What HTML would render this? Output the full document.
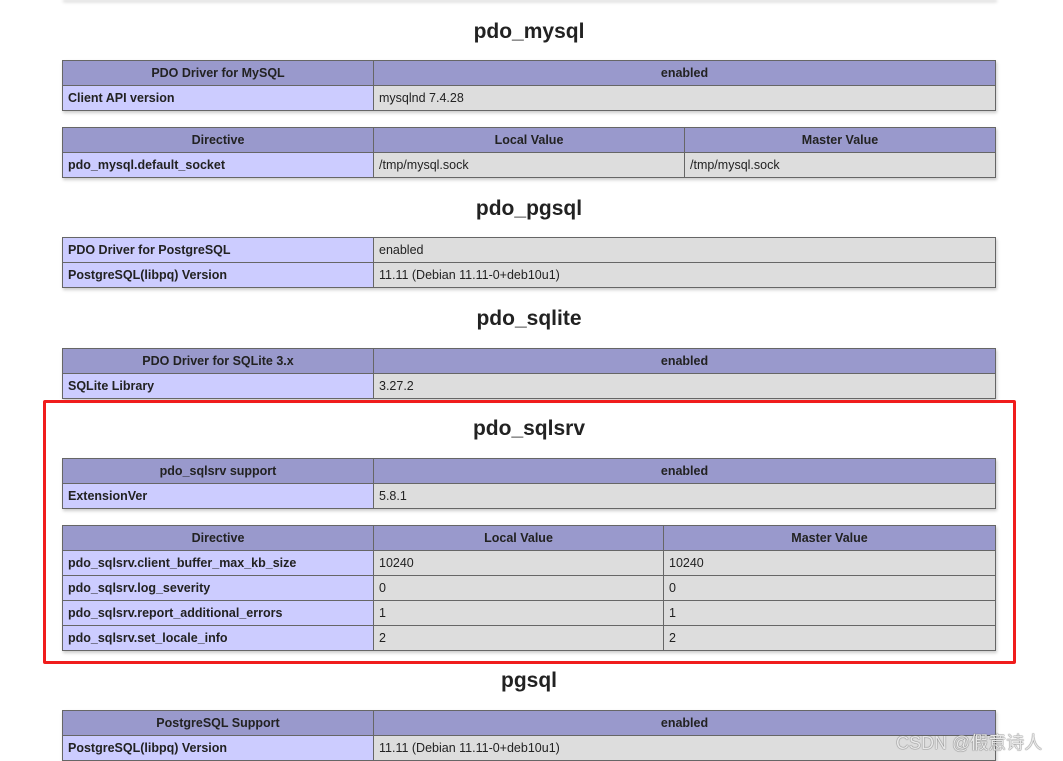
<!DOCTYPE html>
<html><head><meta charset="utf-8"><style>
body{margin:0;width:1063px;height:761px;overflow:hidden;background:#fff;position:relative;font-family:"Liberation Sans","DejaVu Sans",sans-serif;color:#222;}
.t{position:absolute;left:62px;width:934px;border-collapse:collapse;box-shadow:1px 2px 3px #ccc;font-size:12.5px;}
.t td,.t th{border:1px solid #666;height:25px;padding:0 5px;box-sizing:border-box;vertical-align:middle;}
.t th{background:#9999cc;font-weight:bold;text-align:center;}
.t td.e{background:#ccccff;font-weight:bold;}
.t td.v{background:#dddddd;}
h2{position:absolute;left:62px;width:934px;margin:0;text-align:center;font-size:21px;font-weight:bold;color:#222;line-height:26px;}
.red{position:absolute;left:43px;top:400px;width:967px;height:258px;border:3px solid #f01c1c;border-radius:2px;}
.wm{position:absolute;left:896px;top:729px;font-size:18px;color:#e8e8e8;text-shadow:0 0 1px #666,0 0 1px #666;font-family:"Liberation Sans","Noto Sans CJK SC",sans-serif;}
</style></head><body>
<div style="position:absolute;left:62px;top:-2px;width:934px;height:2px;background:#666;box-shadow:1px 2px 3px #ccc"></div>

<h2 style="top:19px">pdo_mysql</h2>
<table class="t" style="top:60px"><tr><th style="width:311px">PDO Driver for MySQL</th><th>enabled</th></tr>
<tr><td class="e">Client API version</td><td class="v">mysqlnd 7.4.28</td></tr></table>
<table class="t" style="top:127px"><tr><th style="width:311px">Directive</th><th style="width:311px">Local Value</th><th>Master Value</th></tr>
<tr><td class="e">pdo_mysql.default_socket</td><td class="v">/tmp/mysql.sock</td><td class="v">/tmp/mysql.sock</td></tr></table>

<h2 style="top:196px">pdo_pgsql</h2>
<table class="t" style="top:237px"><tr><td class="e" style="width:311px">PDO Driver for PostgreSQL</td><td class="v">enabled</td></tr>
<tr><td class="e">PostgreSQL(libpq) Version</td><td class="v">11.11 (Debian 11.11-0+deb10u1)</td></tr></table>

<h2 style="top:306px">pdo_sqlite</h2>
<table class="t" style="top:348px"><tr><th style="width:311px">PDO Driver for SQLite 3.x</th><th>enabled</th></tr>
<tr><td class="e">SQLite Library</td><td class="v">3.27.2</td></tr></table>

<div class="red"></div>
<h2 style="top:416px">pdo_sqlsrv</h2>
<table class="t" style="top:458px"><tr><th style="width:311px">pdo_sqlsrv support</th><th>enabled</th></tr>
<tr><td class="e">ExtensionVer</td><td class="v">5.8.1</td></tr></table>
<table class="t" style="top:525px"><tr><th style="width:311px">Directive</th><th style="width:290px">Local Value</th><th>Master Value</th></tr>
<tr><td class="e">pdo_sqlsrv.client_buffer_max_kb_size</td><td class="v">10240</td><td class="v">10240</td></tr>
<tr><td class="e">pdo_sqlsrv.log_severity</td><td class="v">0</td><td class="v">0</td></tr>
<tr><td class="e">pdo_sqlsrv.report_additional_errors</td><td class="v">1</td><td class="v">1</td></tr>
<tr><td class="e">pdo_sqlsrv.set_locale_info</td><td class="v">2</td><td class="v">2</td></tr></table>

<h2 style="top:668px">pgsql</h2>
<table class="t" style="top:710px"><tr><th style="width:311px">PostgreSQL Support</th><th>enabled</th></tr>
<tr><td class="e">PostgreSQL(libpq) Version</td><td class="v">11.11 (Debian 11.11-0+deb10u1)</td></tr></table>
<div class="wm">CSDN @假意诗人</div>
</body></html>
